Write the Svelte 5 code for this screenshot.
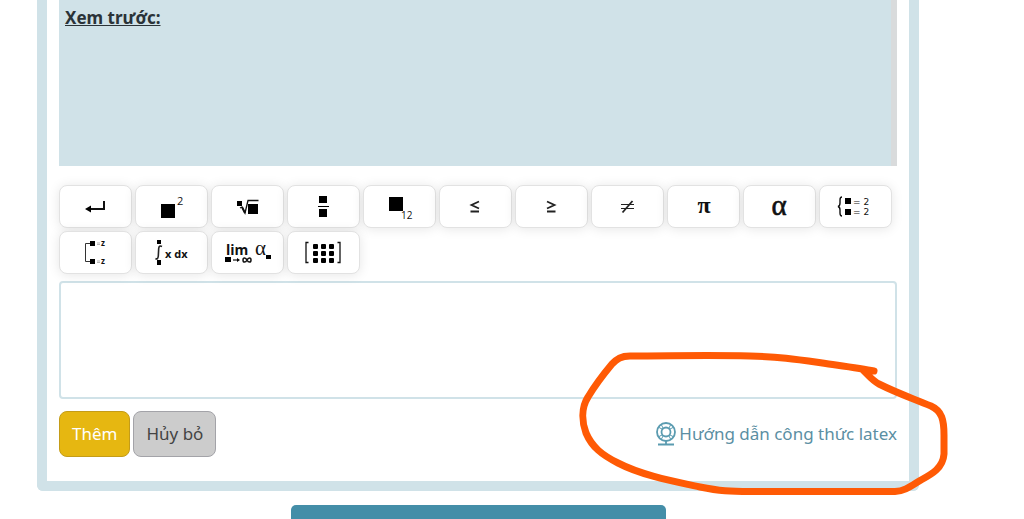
<script>
  const symbols = [
    { id: 'newline', label: 'Xuống dòng' },
    { id: 'power', label: 'Lũy thừa' },
    { id: 'root', label: 'Căn thức' },
    { id: 'fraction', label: 'Phân số' },
    { id: 'subscript', label: 'Chỉ số dưới' },
    { id: 'le', label: 'Nhỏ hơn hoặc bằng' },
    { id: 'ge', label: 'Lớn hơn hoặc bằng' },
    { id: 'ne', label: 'Khác' },
    { id: 'pi', label: 'Pi' },
    { id: 'alpha', label: 'Alpha' },
    { id: 'system', label: 'Hệ phương trình' },
    { id: 'either', label: 'Tuyển phương trình' },
    { id: 'integral', label: 'Tích phân' },
    { id: 'limit', label: 'Giới hạn' },
    { id: 'matrix', label: 'Ma trận' }
  ];
  const cells = [0, 1, 2];
  let formula = $state('');
</script>

<div class="page">
  <main class="panel">
    <section class="preview">
      <h2>Xem trước:</h2>
    </section>

    <div class="symbols">
      {#each symbols as s (s.id)}
        <button type="button" class="symbol" aria-label={s.label}>
          <svg viewBox="0 0 71 41" aria-hidden="true">
            {#if s.id === 'newline'}
              <path d="M44 15V23H29" fill="none" stroke="#111" stroke-width="2" />
              <path d="M25 23l6-3.500v7z" />
            {:else if s.id === 'power'}
              <rect x="25" y="18" width="14" height="14" />
              <text x="41" y="19" font-size="11">2</text>
            {:else if s.id === 'root'}
              <rect x="25" y="15" width="5" height="5" />
              <path d="M28 22l2-1 3 6 3-12.500h10.500" fill="none" stroke="#111" stroke-width="1.300" />
              <path d="M30 21l3 6" stroke="#111" stroke-width="2" />
              <rect x="36" y="18" width="10" height="10" />
            {:else if s.id === 'fraction'}
              <rect x="31" y="10" width="8" height="7" />
              <rect x="30" y="20" width="11" height="1" />
              <rect x="31" y="23" width="8" height="8" />
            {:else if s.id === 'subscript'}
              <rect x="25" y="11" width="14" height="14" />
              <text x="37" y="33" font-size="10">12</text>
            {:else if s.id === 'le'}
              <path d="M39 15.500l-7.500 3.500 7.500 3.500M30.500 25.500h8.500" class="stroke" />
            {:else if s.id === 'ge'}
              <path d="M31 15.500l7.500 3.500-7.500 3.500M31 25.500h8.500" class="stroke" />
            {:else if s.id === 'ne'}
              <path d="M29 18.500h13M29 22.500h13" stroke="#222" stroke-width="1.200" />
              <path d="M40.500 15L30.500 26.500" stroke="#222" stroke-width="1.800" />
            {:else if s.id === 'pi'}
              <text x="36" y="27" font-size="24" class="serif bold" text-anchor="middle">π</text>
            {:else if s.id === 'alpha'}
              <text x="35" y="29" font-size="29" class="serif heavy" text-anchor="middle">α</text>
            {:else if s.id === 'system'}
              <path d="M22 11q-2 0-2 3v3q0 3-2 3.500 2 .5 2 3.500v3q0 3 2 3" fill="none" stroke="#111" stroke-width="1.400" />
              <rect x="25" y="12" width="6" height="6" />
              <rect x="25" y="23" width="6" height="6" />
              <text x="33" y="19" font-size="9" class="wide">= 2</text>
              <text x="33" y="29" font-size="9" class="wide">= 2</text>
            {:else if s.id === 'either'}
              <path d="M30 11.500h-4.500v18H30" fill="none" stroke="#333" stroke-width="1" />
              <rect x="30" y="9" width="5" height="5" />
              <rect x="30" y="27" width="5" height="5" />
              <path d="M37 11h3M37 12.500h3M37 29h3M37 30.500h3" stroke="#999" stroke-width=".7" />
              <text x="41" y="14" font-size="8" class="bold">z</text>
              <text x="41" y="32" font-size="8" class="bold">z</text>
            {:else if s.id === 'integral'}
              <rect x="21" y="8" width="4" height="4" />
              <path d="M26 14.500q-3-1.500-3.300 2l-.4 7.500q-.5 4-2.800 2.500" fill="none" stroke="#222" stroke-width="1.600" />
              <rect x="21" y="28" width="4" height="5" />
              <text x="29" y="26" font-size="11" class="bold">x dx</text>
            {:else if s.id === 'limit'}
              <text x="14" y="23" font-size="14" class="bold">lim</text>
              <text x="43" y="23" font-size="21" class="serif">α</text>
              <rect x="54" y="23" width="5" height="4" />
              <rect x="13" y="25" width="6" height="5" />
              <path d="M21 28h5" stroke="#111" stroke-width="1.200" />
              <path d="M28 28l-3-2v4z" />
              <path d="M35 28c-1.300-2.800-4-2.800-4 0s2.700 2.800 4 0 4-2.800 4 0-2.700 2.800-4 0z" fill="none" stroke="#111" stroke-width="1.500" />
            {:else if s.id === 'matrix'}
              <path d="M20.500 10.500H18v20h2.500M49.500 10.500H52v20h-2.500" fill="none" stroke="#111" stroke-width="1.300" />
              {#each cells as r (r)}
                {#each cells as c (c)}
                  <rect x={25 + c * 8} y={12 + r * 7} width="5" height="5" rx="1" />
                {/each}
              {/each}
            {/if}
          </svg>
        </button>
      {/each}
    </div>

    <textarea aria-label="Công thức" bind:value={formula}></textarea>

    <footer class="actions">
      <button type="button" class="action add">Thêm</button>
      <button type="button" class="action">Hủy bỏ</button>
      <a href="#latex">
        <svg viewBox="0 0 20 24" aria-hidden="true" fill="none" stroke="currentColor">
          <circle cx="10" cy="10" r="9" stroke-width="1.800" />
          <circle cx="10" cy="10" r="4.500" stroke-width="1.800" />
          <path d="M3 5.500l4 2M5.500 3l2 4M17 5.500l-4 2M14.500 3l-2 4M3 14.500l4-2M5.500 17l2-4M17 14.500l-4-2M14.500 17l-2-4" stroke-width="1" />
          <path d="M10 19v3.500M2 22.500h16" stroke-width="1.800" />
        </svg>
        <span>Hướng dẫn công thức latex</span>
      </a>
    </footer>
  </main>

  <button type="button" class="submit" aria-label="Gửi"></button>

  <svg class="marker" viewBox="0 0 1024 519" aria-hidden="true">
    <path
      d="M874 371C864 369 850 367 836 365C800 360 785 357 750 356C705 355 672 356 630 356C621 356 617 359 612 364C602 376 594 387 588 397C581 408 582 422 586 433C592 447 602 455 618 463C641 475 672 481 700 487C720 491 730 491.500 750 491.500H895C905 491 911 486 921 480C932 474 943 468 944 454V435C944 420 942 411 931 406C912 398 899 394 879 384C873 381 869 376 863 370"
    />
  </svg>
</div>

<style>
  :global(body) {
    margin: 0;
    background: #fff;
  }

  .page {
    position: relative;
    height: 100vh;
    overflow: hidden;
    padding: 0 105px 0 37px;
    box-sizing: border-box;
    font-family: 'Noto Sans', 'Open Sans', sans-serif;
    font-size: 17px;
    line-height: 24px;
    color: #333;
  }

  .panel {
    border: 10px solid #d0e2e8;
    border-top: 0;
    border-radius: 0 0 6px 6px;
    padding: 0 12px 24px;
  }

  .preview {
    height: 166px;
    box-sizing: border-box;
    padding: 6px;
    background: #d0e2e8;
    border-right: 6px solid #d9dbdc;
  }

  h2 {
    margin: 0;
    font-size: 17px;
    font-weight: 700;
    text-decoration: underline;
    color: #2b3338;
  }

  .symbols {
    display: flex;
    flex-wrap: wrap;
    gap: 3px;
    padding: 19px 0 7px;
  }

  button {
    font: inherit;
    cursor: pointer;
  }

  .symbol {
    width: 73px;
    height: 43px;
    padding: 0;
    border: 1px solid #e2e2e2;
    border-radius: 8px;
    background: #fff;
    box-shadow: 0 1px 12px rgba(0, 0, 0, 0.1);
  }

  .symbol svg {
    display: block;
    width: 100%;
    height: 100%;
    fill: #000;
  }

  .symbol text {
    font-family: 'Open Sans', sans-serif;
    fill: #111;
  }

  .symbol .serif {
    font-family: 'Liberation Serif', serif;
  }

  .symbol .wide {
    font-family: 'DejaVu Sans', sans-serif;
  }

  .bold {
    font-weight: 700;
  }

  .heavy {
    stroke: #111;
    stroke-width: 0.6;
  }

  .stroke {
    fill: none;
    stroke: #222;
    stroke-width: 1.8;
  }

  textarea {
    display: block;
    width: 100%;
    height: 118px;
    box-sizing: border-box;
    padding: 8px;
    border: 2px solid #d0e2e8;
    border-radius: 4px;
    background: #fff;
    font: inherit;
    resize: none;
  }

  .actions {
    display: flex;
    align-items: center;
    gap: 3px;
    padding: 12px 0 0;
  }

  .action {
    height: 46px;
    padding: 0 12px;
    border: 1px solid #a3a3a8;
    border-radius: 8px;
    background: #ccc;
    color: #444;
  }

  .add {
    border-color: #c49c18;
    background: #e6b711;
    color: #fff;
  }

  a {
    display: flex;
    align-items: center;
    gap: 3px;
    margin-left: auto;
    color: #5b8fa3;
    text-decoration: none;
  }

  a svg {
    width: 20px;
    height: 24px;
    color: #5a9bb0;
  }

  .submit {
    display: block;
    width: 375px;
    height: 46px;
    margin: 14px auto 0;
    border: 0;
    border-radius: 5px;
    background: #448ea8;
  }

  .marker {
    position: absolute;
    top: 0;
    left: 0;
    width: 1024px;
    height: 519px;
    pointer-events: none;
    fill: none;
    stroke: #ff5a05;
    stroke-width: 7;
    stroke-linecap: round;
    stroke-linejoin: round;
  }
</style>
